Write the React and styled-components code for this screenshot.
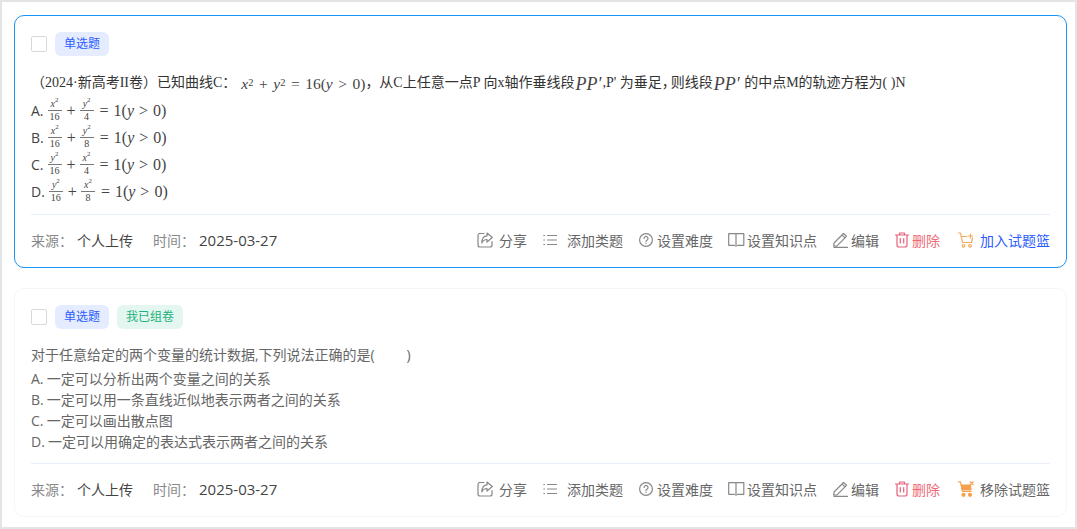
import styled, { createGlobalStyle } from "styled-components";

const GlobalStyle = createGlobalStyle`
  html, body { margin: 0; padding: 0; background: #fff; }
  * { box-sizing: border-box; }
`;

const CJK = `"Noto Sans CJK SC", sans-serif`;

const Frame = styled.div`
  width: 1077px;
  height: 529px;
  overflow: hidden;
  border: 2px solid #e4e4e4;
  padding: 13px 8px 0 12px;
  display: flex;
  flex-direction: column;
  gap: 20px;
  font-family: "Open Sans", ${CJK};
  font-size: 14px;
  color: #666;
`;

const Card = styled.div`
  border: 1px solid ${(p) => (p.$active ? "#1a95f5" : "#f6f6f6")};
  border-radius: 10px;
  padding: 16px 16px 0;
  height: ${(p) => p.$height}px;
`;

const Head = styled.div`
  display: flex;
  align-items: center;
  height: 24px;
  gap: 8px;
`;

const Check = styled.span`
  width: 16px;
  height: 16px;
  border: 1px solid #d9d9d9;
  border-radius: 2px;
  background: #fff;
`;

const Tag = styled.span`
  height: 24px;
  line-height: 24px;
  padding: 0 9px;
  border-radius: 6px;
  font-size: 12px;
  background: ${(p) => (p.$green ? "#e3f6ef" : "#e6ecff")};
  color: ${(p) => (p.$green ? "#1db37c" : "#2b5cff")};
`;

const Question = styled.div`
  margin-top: ${(p) => p.$top}px;
  height: 20px;
  line-height: 20px;
  font-size: 14px;
  white-space: nowrap;
  color: ${(p) => (p.$serif ? "#333" : "#666")};
  font-family: ${(p) => (p.$serif ? `"Liberation Serif", ${CJK}` : `"Open Sans", ${CJK}`)};
`;

const NarrowComma = styled.span`
  letter-spacing: -5px;
`;

const Options = styled.div`
  margin-top: ${(p) => p.$top}px;
  padding-bottom: ${(p) => p.$bottom}px;
  border-bottom: 1px solid #e8eefa;
`;

const Option = styled.div`
  display: flex;
  align-items: center;
  height: ${(p) => p.$height}px;
  gap: 4px;
  white-space: nowrap;
  word-spacing: -0.5px;
  color: ${(p) => (p.$dark ? "#444" : "#666")};
`;

const Formula = styled.span`
  display: inline-flex;
  align-items: center;
  font-family: "Liberation Serif", serif;
  font-size: ${(p) => p.$size || 16}px;
  color: #444;
  vertical-align: middle;
  word-spacing: 0;
  margin: 0 ${(p) => p.$right || 0}px 0 ${(p) => p.$left || 0}px;
`;

const Mi = styled.i`
  font-style: italic;
`;

const Sup = styled.sup`
  font-size: 0.68em;
  line-height: 0;
  position: relative;
  top: -0.1em;
  vertical-align: super;
`;

const Op = styled.span`
  margin: 0 ${(p) => p.$space ?? 4}px;
`;

const Frac = styled.span`
  display: inline-flex;
  flex-direction: column;
  align-items: center;
  font-size: 10px;
  line-height: 10px;
  min-width: 14px;
  margin: 0 1px 0 0;
`;

const Num = styled.span`
  align-self: stretch;
  text-align: center;
  padding: 0 1px 1px;
  border-bottom: 1px solid #777;
  white-space: nowrap;
`;

const Den = styled.span`
  padding-top: 1px;
`;

const Footer = styled.div`
  display: flex;
  align-items: center;
  justify-content: space-between;
  height: ${(p) => p.$height}px;
  white-space: nowrap;
`;

const Meta = styled.div`
  display: flex;
  align-items: center;
`;

const Label = styled.span`
  color: #888;
  width: ${(p) => p.$width}px;
`;

const Value = styled.span`
  color: #444;
  width: ${(p) => p.$width}px;
  font-size: ${(p) => p.$size || 14}px;
`;

const Actions = styled.div`
  display: flex;
  align-items: center;
  gap: 16px;
`;

const Action = styled.span`
  display: inline-flex;
  align-items: center;
  gap: ${(p) => p.$gap}px;
  margin-left: ${(p) => p.$left || 0}px;
  color: ${(p) => p.$color || "#666"};
`;

const Svg = styled.svg`
  display: block;
  flex: none;
  fill: none;
  stroke: ${(p) => p.$color || "#888"};
  stroke-width: 1.2;
  stroke-linecap: round;
  stroke-linejoin: round;
`;

const ShareIcon = () => (
  <Svg width="16" height="16" viewBox="0 0 16 16">
    <path d="M7 1.500H3.500A2 2 0 0 0 1 3.500v9.500a2 2 0 0 0 2 2H13a2 2 0 0 0 2-2V9.500" />
    <path d="M10 1 15.300 5.500 10 10V7.500C7.500 7.500 5.800 8.700 4.800 11 4.800 7 6.800 4 10 3.800Z" />
  </Svg>
);

const ListIcon = () => (
  <Svg width="14" height="14" viewBox="0 0 14 14">
    <path d="M4.500 2.500H13.500M4.500 7H13.500M4.500 11.500H13.500M.8 2.500H1.500M.8 7H1.500M.8 11.500H1.500" />
  </Svg>
);

const HelpIcon = () => (
  <Svg width="14" height="14" viewBox="0 0 14 14">
    <circle cx="7" cy="7" r="6.400" />
    <path d="M5.100 5.400A1.950 1.950 0 1 1 8.200 7C7.400 7.500 7 7.900 7 8.700M7 10.400V10.500" />
  </Svg>
);

const BookIcon = () => (
  <Svg width="17" height="14" viewBox="0 0 17 14">
    <path d="M.7.700H15.800V12.300H9.500M6.500 12.300H.7V.700M8 .700V13.400" />
  </Svg>
);

const PencilIcon = () => (
  <Svg width="15" height="16" viewBox="0 0 15 16">
    <path d="M1 11 10.500 1.500 13.500 4.300 4 13.800 .8 14.200ZM9 3 12 5.900" />
    <path d="M1 15.400H14.500" />
  </Svg>
);

const TrashIcon = () => (
  <Svg width="14" height="16" viewBox="0 0 14 16" $color="#e8607a">
    <path d="M.5 3H13.500M4.500 3V1H9.500V3M2 3V13A2 2 0 0 0 4 15H10A2 2 0 0 0 12 13V3M5.300 6.500V11M8.700 6.500V11" />
  </Svg>
);

const CartIcon = () => (
  <Svg width="16" height="16" viewBox="0 0 16 16" $color="#f5a95f">
    <path d="M.5 1H2.500L4.500 10.500H13.500L14.500 6" />
    <path d="M3.300 4.500H9M12.500 2V6M10.500 4H14.500" />
    <circle cx="5.500" cy="13.800" r="1.300" />
    <circle cx="12" cy="13.800" r="1.300" />
  </Svg>
);

const CartFilledIcon = () => (
  <Svg width="16" height="16" viewBox="0 0 16 16" $color="#f5a04f">
    <path d="M.5 .8H2.500L4.500 10.500H13" />
    <path d="M3.200 4H12.500L13 9H4.300Z" fill="#f5a04f" />
    <path d="M12.500 1 15 3.500M15 1 12.500 3.500" strokeWidth="1.500" />
    <circle cx="5.500" cy="13.800" r="1.500" fill="#f5a04f" />
    <circle cx="12" cy="13.800" r="1.500" fill="#f5a04f" />
  </Svg>
);

const Fraction = ({ top, sup, bottom }) => (
  <Frac>
    <Num>
      <Mi>{top}</Mi>
      <Sup>{sup}</Sup>
    </Num>
    <Den>{bottom}</Den>
  </Frac>
);

const OptionFormula = ({ a, b, c, d }) => (
  <Formula>
    <Fraction top={a} sup="2" bottom={b} />
    <Op $space={4}>+</Op>
    <Fraction top={c} sup="2" bottom={d} />
    <Op $space={5}>=</Op>1(<Mi>y</Mi>
    <Op $space={5}>&gt;</Op>0)
  </Formula>
);

const Prime = () => (
  <Formula $size={18} $left={1} $right={1}>
    <Mi>PP′</Mi>
  </Formula>
);

const FooterRow = ({ height, children }) => (
  <Footer $height={height}>
    <Meta>
      <Label $width={46}>来源：</Label>
      <Value $width={76}>个人上传</Value>
      <Label $width={46}>时间：</Label>
      <Value $size={15}>2025-03-27</Value>
    </Meta>
    <Actions>
      <Action $gap={6}><ShareIcon />分享</Action>
      <Action $gap={10}><ListIcon />添加类题</Action>
      <Action $gap={4}><HelpIcon />设置难度</Action>
      <Action $gap={2} $left={-1}><BookIcon />设置知识点</Action>
      <Action $gap={3}><PencilIcon />编辑</Action>
      <Action $gap={3} $color="#ef6a76"><TrashIcon />删除</Action>
      {children}
    </Actions>
  </Footer>
);

export default function App() {
  return (
    <>
      <GlobalStyle />
      <Frame>
        <Card $active $height={253}>
          <Head>
            <Check />
            <Tag>单选题</Tag>
          </Head>
          <Question $serif $top={17}>
            （2024·新高考II卷）已知曲线C：
            <Formula $size={15.5} $left={5}>
              <Mi>x</Mi><Sup>2</Sup><Op $space={5.5}>+</Op><Mi>y</Mi><Sup>2</Sup><Op $space={5.5}>=</Op>16(<Mi>y</Mi><Op $space={5.5}>&gt;</Op>0)
            </Formula>
            ，从C上任意一点P 向x轴作垂线段<Prime />,P' 为垂足<NarrowComma>，</NarrowComma>则线段<Prime /> 的中点M的轨迹方程为( )N
          </Question>
          <Options $top={4} $bottom={9}>
            <Option $height={27} $dark>A. <OptionFormula a="x" b="16" c="y" d="4" /></Option>
            <Option $height={27} $dark>B. <OptionFormula a="x" b="16" c="y" d="8" /></Option>
            <Option $height={27} $dark>C. <OptionFormula a="y" b="16" c="x" d="4" /></Option>
            <Option $height={27} $dark>D. <OptionFormula a="y" b="16" c="x" d="8" /></Option>
          </Options>
          <FooterRow height={50}>
            <Action $gap={6} $left={2} $color="#2b5cff"><CartIcon />加入试题篮</Action>
          </FooterRow>
        </Card>
        <Card $height={229}>
          <Head>
            <Check />
            <Tag>单选题</Tag>
            <Tag $green>我已组卷</Tag>
          </Head>
          <Question $top={16}>对于任意给定的两个变量的统计数据,下列说法正确的是(　　 )</Question>
          <Options $top={2} $bottom={12}>
            <Option $height={21}>A. 一定可以分析出两个变量之间的关系</Option>
            <Option $height={21}>B. 一定可以用一条直线近似地表示两者之间的关系</Option>
            <Option $height={21}>C. 一定可以画出散点图</Option>
            <Option $height={21}>D. 一定可以用确定的表达式表示两者之间的关系</Option>
          </Options>
          <FooterRow height={50}>
            <Action $gap={6} $left={2}><CartFilledIcon />移除试题篮</Action>
          </FooterRow>
        </Card>
      </Frame>
    </>
  );
}
